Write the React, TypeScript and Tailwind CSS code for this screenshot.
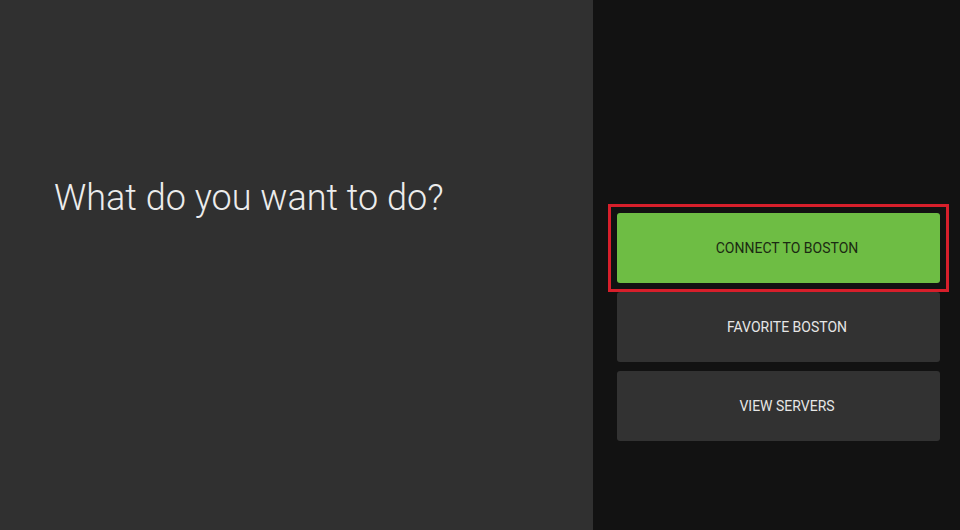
export default function App() {
  return (
    <div className="flex h-[530px] w-[960px] overflow-hidden font-['Roboto',sans-serif]">
      <div className="w-[593px] shrink-0 bg-[#303030] pl-[54px] pt-[176px]">
        <h1 className="text-[36px] font-light leading-[44px] text-[#ececec]">What do you want to do?</h1>
      </div>
      <div className="flex flex-1 flex-col gap-[9px] bg-[#121212] pl-[24px] pr-[20px] pt-[213px]">
        <button className="relative h-[70px] rounded-[3px] bg-[#6ebd44] pl-[17px] text-[14px] uppercase text-[#1b2a12] before:absolute before:-inset-[9px] before:border-[3px] before:border-[#d71f2b] before:content-['']">
          Connect to Boston
        </button>
        <button className="h-[70px] rounded-[3px] bg-[#323232] pl-[17px] text-[14px] uppercase text-[#e6e6e6]">
          Favorite Boston
        </button>
        <button className="h-[70px] rounded-[3px] bg-[#323232] pl-[17px] text-[14px] uppercase text-[#e6e6e6]">
          View Servers
        </button>
      </div>
    </div>
  );
}
